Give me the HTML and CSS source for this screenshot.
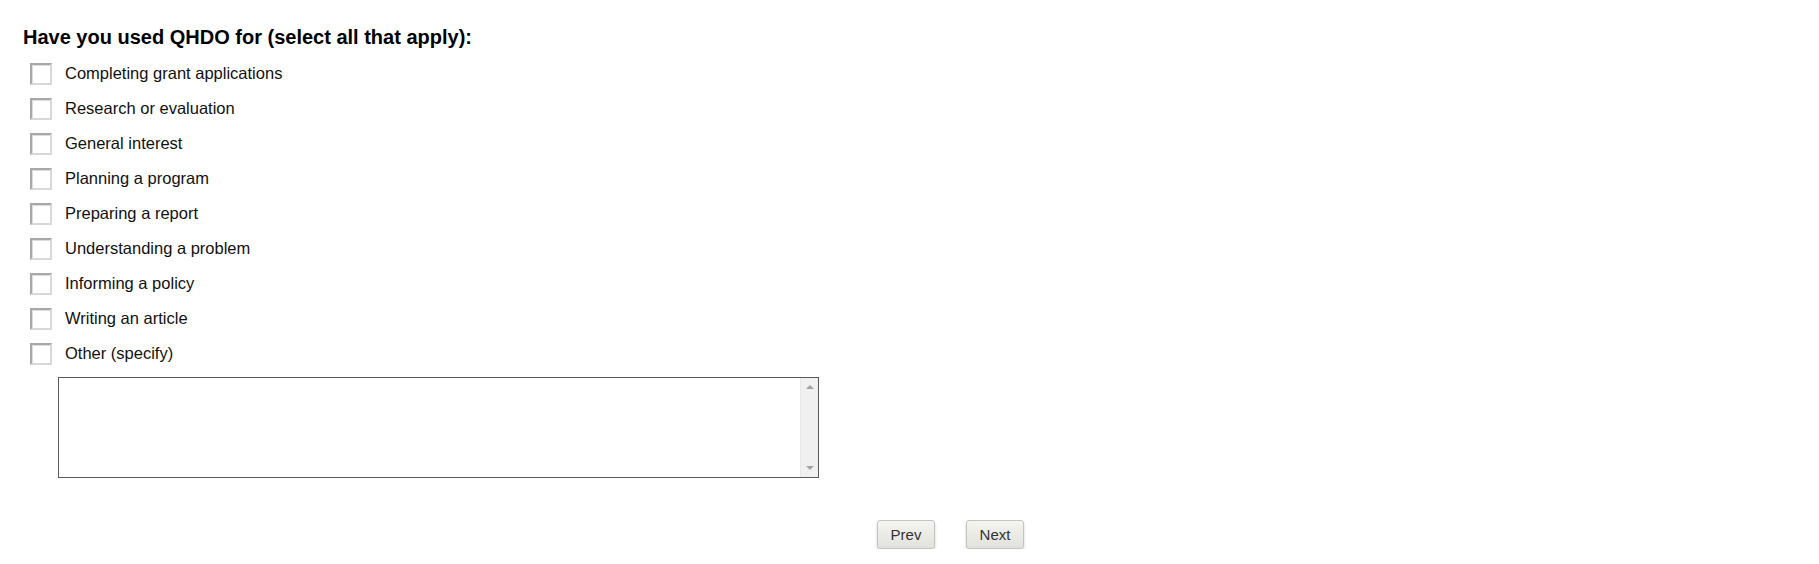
FILE: index.html
```html
<!DOCTYPE html>
<html lang="en">
<head>
  <meta charset="UTF-8">
  <title>QHDO survey</title>
  <link rel="stylesheet" href="styles.css">
</head>
<body>
  <form class="survey">
    <h2 class="question">Have you used QHDO for (select all that apply):</h2>
    <div class="options">
      <label class="option"><input type="checkbox" class="box"><span>Completing grant applications</span></label>
      <label class="option"><input type="checkbox" class="box"><span>Research or evaluation</span></label>
      <label class="option"><input type="checkbox" class="box"><span>General interest</span></label>
      <label class="option"><input type="checkbox" class="box"><span>Planning a program</span></label>
      <label class="option"><input type="checkbox" class="box"><span>Preparing a report</span></label>
      <label class="option"><input type="checkbox" class="box"><span>Understanding a problem</span></label>
      <label class="option"><input type="checkbox" class="box"><span>Informing a policy</span></label>
      <label class="option"><input type="checkbox" class="box"><span>Writing an article</span></label>
      <label class="option"><input type="checkbox" class="box"><span>Other (specify)</span></label>
    </div>

    <div class="specify">
      <div class="specify-text" contenteditable="true"></div>
      <div class="scrollbar">
        <span class="arrow up"></span>
        <span class="arrow down"></span>
      </div>
    </div>

    <div class="nav">
      <button type="button" class="btn">Prev</button>
      <button type="button" class="btn">Next</button>
    </div>
  </form>
</body>
</html>
```

FILE: styles.css
```css
body {
  font-family: "Liberation Sans", Arial, sans-serif;
  margin: 0;
  color: #111;
  background: #fff;
}
.survey {
  padding: 26px 0 0 23px;
}
.question {
  font-size: 20px;
  font-weight: bold;
  margin: 0 0 8px 0;
  color: #000;
  line-height: 22px;
}
.options {
  display: flex;
  flex-direction: column;
  padding-left: 7px;
}
.option {
  display: flex;
  align-items: center;
  height: 35px;
  font-size: 16.5px;
}
.box {
  appearance: none;
  -webkit-appearance: none;
  width: 22px;
  height: 22px;
  margin: 0 13px 0 0;
  box-sizing: border-box;
  border: 2px solid #d8d8d8;
  border-left-color: #a8a8a8;
  border-top-color: #a8a8a8;
  box-shadow: inset 1px 1px 0 #dcdcdc;
  background: #fff;
}
.specify {
  display: flex;
  width: 761px;
  height: 101px;
  margin: 6px 0 0 35px;
  box-sizing: border-box;
  border: 1px solid #5a5a5a;
}
.specify-text {
  flex: 1;
  outline: none;
}
.scrollbar {
  width: 17px;
  background: #f0f0f0;
  border-left: 1px solid #e8e8e8;
  display: flex;
  flex-direction: column;
  justify-content: space-between;
  align-items: center;
  padding: 7px 0 7px 0;
}
.arrow {
  width: 0;
  height: 0;
  border-left: 4px solid transparent;
  border-right: 4px solid transparent;
}
.arrow.up {
  border-bottom: 4px solid #a3a3a3;
}
.arrow.down {
  border-top: 4px solid #a3a3a3;
}
.nav {
  display: flex;
  gap: 31px;
  margin: 42px 0 0 854px;
}
.btn {
  font-family: "Liberation Sans", Arial, sans-serif;
  font-size: 15px;
  color: #333;
  width: 58px;
  height: 29px;
  padding: 0;
  border: 1px solid #c4c4bf;
  border-radius: 3px;
  background: linear-gradient(#f4f4f0, #e2e2dc);
  box-shadow: 0 2px 3px rgba(0, 0, 0, 0.18);
}
```
